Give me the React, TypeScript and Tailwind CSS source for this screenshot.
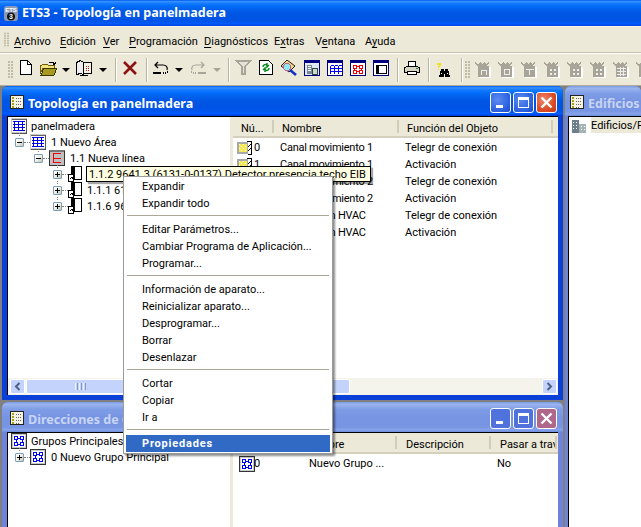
import React from "react";

const Svg = ({ w = 16, h = 16, children, className = "" }: { w?: number; h?: number; children: React.ReactNode; className?: string }) => (
  <svg width={w} height={h} viewBox={`0 0 ${w} ${h}`} shapeRendering="crispEdges" className={`shrink-0 block ${className}`}>
    {children}
  </svg>
);

const GridIcon = () => (
  <Svg>
    <rect x="0.5" y="0.5" width="15" height="15" fill="#fff" stroke="#000080" />
    <rect x="1" y="1" width="14" height="2" fill="#000080" />
    <path d="M3 5v8M7 5v8M11 5v8M3 5h3M3 8h3M3 11h3M7 5h3M7 8h3M7 11h3M11 5h3M11 8h3M11 11h3" stroke="#0000ff" fill="none" transform="translate(.5 .5)" />
  </Svg>
);
const RedGridIcon = () => (
  <Svg>
    <rect x="0.5" y="0.5" width="15" height="15" fill="#fff" stroke="#000080" />
    <rect x="1" y="1" width="14" height="2" fill="#000080" />
    <path d="M3 5h3v3h-3zM9 5h3v3h-3zM3 10h3v3h-3zM9 10h3v3h-3zM6 6h3M6 11h3M4 8v2M11 8v2" stroke="#f00000" fill="none" transform="translate(.5 .5)" />
  </Svg>
);
const FrameIcon = () => (
  <Svg>
    <rect x="0.5" y="0.5" width="15" height="15" fill="#fff" stroke="#000080" />
    <rect x="1" y="1" width="14" height="2" fill="#000080" />
    <rect x="3.5" y="5.5" width="10" height="8" fill="#fff" stroke="#000" />
    <rect x="3" y="5" width="3" height="9" fill="#000" />
  </Svg>
);
const TreeGrid = () => (
  <Svg>
    <rect x="0" y="0" width="16" height="16" fill="#c8c8c8" />
    <rect x="0.5" y="0.5" width="15" height="2" fill="#666" />
    <rect x="1" y="2" width="14" height="12" fill="#fff" />
    <path d="M2 3.500h12M2 6.500h12M2 9.500h12M2 12.500h12M3.500 3v10M7.500 3v10M11.500 3v10" stroke="#0000f0" fill="none" />
    <path d="M15.500 1v15M1 15.500h15" stroke="#555" />
  </Svg>
);
const TreeLine = () => (
  <Svg>
    <rect x="0" y="0" width="16" height="16" fill="#c0c0c0" />
    <rect x="0" y="0" width="16" height="2" fill="#777" />
    <path d="M4.500 3v10M4 3.500h8M4 8.500h8M4 12.500h8" stroke="#f00000" fill="none" />
    <path d="M15.500 1v15M0 15.500h16M0.500 1v15" stroke="#333" />
  </Svg>
);
const TreeGroup = () => (
  <Svg>
    <rect x="0" y="0" width="16" height="16" fill="#c8c8c8" />
    <rect x="2" y="2" width="12" height="12" fill="#fff" />
    <path d="M3.500 3.500h3v3h-3zM9.500 3.500h3v3h-3zM3.500 9.500h3v3h-3zM9.500 9.500h3v3h-3zM6 5.500h4M6 11.500h4M5 6v4M11 6v4" stroke="#0000f0" fill="none" />
    <path d="M15.500 1v15M0 15.500h16M0.500 0v16M0 0.500h16" stroke="#333" />
  </Svg>
);
const Device = () => (
  <Svg w={14} h={16}>
    <rect x="3.500" y="0.500" width="10" height="13" fill="#fff" stroke="#000" />
    <rect x="3" y="0" width="4" height="14" fill="#000" />
    <rect x="0" y="8" width="6" height="8" fill="#fff" />
    <rect x="0.500" y="8.500" width="5" height="7" fill="#fff" stroke="#000" />
    <path d="M2 13l2-2M3 11h1.500v1.500" stroke="#000" fill="none" />
  </Svg>
);
const ObjIcon = () => (
  <Svg w={17} h={14}>
    <rect x="0" y="1" width="11" height="12" fill="#a8a8a8" />
    <rect x="2" y="3" width="8" height="8" fill="#f6ea50" />
    <path d="M2 3h1M4 5h1M6 3h1M8 5h1M2 7h1M6 7h1M4 9h1M8 9h1" stroke="#fff" transform="translate(0 .5)" />
    <path d="M9 0h5M14 0v13M10 13h4M10 6l3-3M10 10l3-3" stroke="#000" fill="none" transform="translate(.5 .5)" />
  </Svg>
);
const ListIcon = () => (
  <Svg w={14} h={14}>
    <rect x="0.500" y="0.500" width="13" height="13" fill="#f4f2e4" stroke="#222" />
    <path d="M2 3h2M2 6h2M2 9h2M2 12h2" stroke="#a8a010" strokeWidth="2" />
    <path d="M6 3.500h6M6 6.500h6M6 9.500h6M6 12h4" stroke="#666" strokeDasharray="1 1" />
  </Svg>
);

const Expander = ({ open }: { open?: boolean }) => (
  <span className="relative w-[9px] h-[9px] shrink-0 rounded-[1px] border border-[#7b9ebd] bg-[linear-gradient(135deg,#ffffff,#f0efe5_50%,#c6c3b2)] flex items-center justify-center">
    <span className="w-[5px] h-px bg-black" />
    {!open && <span className="absolute w-px h-[5px] bg-black left-[3px] top-[1px]" />}
  </span>
);

const Dots = ({ className }: { className: string }) => (
  <span className={`absolute border-l border-dotted border-[#808080] w-px ${className}`} />
);

type RowP = { pad: string; open?: boolean; icon: React.ReactNode; text: string; leaf?: boolean; children?: React.ReactNode };
const TreeRow = ({ pad, open, icon, text, leaf, children }: RowP) => (
  <div className={`relative h-4 flex items-center ${pad}`}>
    {children}
    {!leaf && <Expander open={open} />}
    {!leaf && <span className="w-[6px] border-t border-dotted border-[#808080] shrink-0" />}
    {icon}
    <span className={`${leaf ? "ml-[4px]" : "ml-[5px]"} whitespace-nowrap`}>{text}</span>
  </div>
);

const CapButton = ({ kind, active }: { kind: "min" | "max" | "close"; active: boolean }) => {
  const bg =
    kind === "close"
      ? active
        ? "bg-[radial-gradient(circle_at_35%_35%,#f0896e,#dc4a26_60%,#c23a18)]"
        : "bg-[#b0688a]"
      : active
        ? "bg-[radial-gradient(circle_at_35%_35%,#5b8cf0,#2a5fe0_70%,#1e48c8)]"
        : "bg-[#4f72dc]";
  return (
    <span className={`relative w-[21px] h-[21px] rounded-[3px] border border-white flex items-center justify-center ${bg}`}>
      {kind === "min" && <span className="absolute left-[5px] bottom-[4px] w-[7px] h-[3px] bg-white" />}
      {kind === "max" && <span className="w-[11px] h-[11px] border border-white border-t-[3px]" />}
      {kind === "close" && (
        <svg width="13" height="13" viewBox="0 0 13 13">
          <path d="M1.500 1.500l10 10M11.500 1.500l-10 10" stroke="#fff" strokeWidth="2.400" />
        </svg>
      )}
    </span>
  );
};

const activeBar =
  "bg-[linear-gradient(180deg,#0058ee_0%,#3593ff_6%,#1a7dff_12%,#036ffc_22%,#0262ee_34%,#0057e5_48%,#0054e3_66%,#0055eb_84%,#005bff_92%,#003dd7_100%)]";
const inactiveBar =
  "bg-[linear-gradient(180deg,#7a9ae6_0%,#9ab4ee_8%,#7f9de6_24%,#7694e2_50%,#7795e2_84%,#86a3ea_92%,#6f8ddc_100%)]";

const Win = ({
  title,
  active,
  buttons,
  iconMl = "ml-[8px]",
  className,
  children,
}: {
  title: string;
  active: boolean;
  buttons?: boolean;
  iconMl?: string;
  className: string;
  children: React.ReactNode;
}) => (
  <div className={`flex flex-col min-h-0 overflow-hidden rounded-t-[6px] ${active ? "bg-[#0a3fd8]" : "bg-[#6f83d8]"} ${className}`}>
    <div className={`h-[30px] pt-[2px] shrink-0 flex items-center ${active ? activeBar : inactiveBar}`}>
      <span className={`mr-[4px] ${iconMl}`}>
        <ListIcon />
      </span>
      <span className={`pt-[4px] text-[12.500px] font-bold whitespace-nowrap font-['Noto_Sans',sans-serif] ${active ? "text-white" : "text-[#c8d4f4]"}`}>{title}</span>
      {buttons && (
        <span className="ml-auto mr-[6px] flex gap-[2px]">
          <CapButton kind="min" active={active} />
          <CapButton kind="max" active={active} />
          <CapButton kind="close" active={active} />
        </span>
      )}
    </div>
    {children}
  </div>
);

const Th = ({ w, text, cls = "pl-[8px]" }: { w: string; text: string; cls?: string }) => (
  <div className={`relative h-full pt-[4px] flex items-center whitespace-nowrap overflow-hidden shrink-0 ${w} ${cls}`}>
    {text}
    <span className="absolute right-0 top-[3px] bottom-[3px] w-[2px] bg-[#d0cdb8]" />
  </div>
);
const ListHead = ({ children }: { children: React.ReactNode }) => (
  <div className="h-[21px] shrink-0 flex bg-[#ece9d8] border-b-[2px] border-[#d4d0bd]">{children}</div>
);

const Scroll = ({ dir }: { dir: "l" | "r" }) => (
  <span className="w-[15px] h-[15px] shrink-0 rounded-[2px] border border-white bg-[#c3d3fb] flex items-center justify-center">
    <svg width="7" height="9" viewBox="0 0 7 9">
      <path d={dir === "l" ? "M5.500 1L2 4.500 5.500 8" : "M1.500 1L5 4.500 1.500 8"} fill="none" stroke="#4d6185" strokeWidth="2" />
    </svg>
  </span>
);

const ObjRow = ({ n, name, fn }: { n: string; name: string; fn: string }) => (
  <div className="h-[17px] flex items-center whitespace-nowrap">
    <span className="ml-[4px] w-[17px]">
      <ObjIcon />
    </span>
    <span className="w-[26px]">{n}</span>
    <span className="w-[125px] tracking-[-0.25px]">{name}</span>
    <span>{fn}</span>
  </div>
);

const U = ({ a, u, b, w }: { a: string; u: string; b: string; w: string }) => (
  <span className={`shrink-0 whitespace-nowrap ${w}`}>
    {a}
    <span className="underline underline-offset-2">{u}</span>
    {b}
  </span>
);

const Grip = ({ className }: { className: string }) => (
  <span className={`shrink-0 w-[5px] grid grid-cols-2 gap-[1px] ${className}`}>
    {Array.from({ length: 12 }).map((_, i) => (
      <span key={i} className="w-[2px] h-[2px] bg-[#c1bca6]" />
    ))}
  </span>
);

const Sep = ({ cls }: { cls: string }) => <span className={`shrink-0 w-[2px] h-[24px] bg-[#b8b5a2] border-r border-white ${cls}`} />;
const Caret = ({ gray, cls }: { gray?: boolean; cls: string }) => (
  <span
    className={`shrink-0 w-0 h-0 border-x-[4px] border-x-transparent border-t-[4px] ${gray ? "border-t-[#a8a498]" : "border-t-black"} ${cls}`}
  />
);

const DisabledIcon = ({ v, cls }: { v: number; cls: string }) => (
  <span className={`shrink-0 translate-y-[2px] ${cls}`}>
    <Svg>
      <rect x="4" y="5" width="12" height="11" fill="#fff" />
      <path d="M0 0l3 2 2-2 2 2 2-2 2 2 3-2v2l-3 2H3L0 2z" fill="#a8a498" />
      <rect x="3" y="4" width="11" height="11" fill="#a8a498" />
      {v === 0 && <path d="M6 13V8h5v5" fill="none" stroke="#eee" />}
      {v === 1 && <rect x="6.500" y="7.500" width="5" height="5" fill="none" stroke="#eee" />}
      {v === 2 && <path d="M5 7.500h8M8.500 7v6" fill="none" stroke="#eee" />}
      {v === 3 && <path d="M6 7h2v2H6zM10 7h2v2h-2zM6 11h2v2H6zM10 11h2v2h-2z" fill="#eee" />}
      {v === 4 && <path d="M4 6.500h9M4 9.500h9M4 12.500h9M7.500 5v9M10.500 5v9" fill="none" stroke="#eee" />}
    </Svg>
  </span>
);

const Toolbar = () => (
  <div className="h-[32px] shrink-0 flex items-center bg-[#ece9d8] border-t border-white [&_svg]:-translate-y-[2px]">
    <Grip className="ml-[8px]" />
    <span className="ml-[7px]">
      <Svg w={12} h={15}>
        <path d="M.5.500h7l4 4v10H.5z" fill="#fff" stroke="#000" />
        <path d="M7.500.5v4h4" fill="none" stroke="#000" />
      </Svg>
    </span>
    <span className="ml-[8px]">
      <Svg w={17} h={16}>
        <path d="M0 5h2l1-1h4l1 1h6v3H3l-3 6z" fill="#f4e27a" stroke="#6b5a10" strokeWidth="1" />
        <path d="M1 15l3-7h13l-3 7z" fill="#a89a20" stroke="#3a3a00" />
        <path d="M9 2.500h4l2 2M13 5l2-.5.5-2" fill="none" stroke="#000" />
      </Svg>
    </span>
    <Caret cls="ml-[5px]" />
    <span className="ml-[6px]">
      <Svg w={16} h={16}>
        <path d="M.5 2.500l4-2 3 2v12l-3-1-4 1z" fill="#eee" stroke="#000" />
        <path d="M7.500 2.500h8v11h-8z" fill="#f4f2e4" stroke="#000" />
        <path d="M10 6h1M12 6h1M10 8h1M12 8h1M10 10h1M12 10h1" stroke="#b02020" />
        <path d="M4 15.500h8" stroke="#000" />
      </Svg>
    </span>
    <Caret cls="ml-[7px]" />
    <Sep cls="ml-[8px]" />
    <span className="ml-[6px]">
      <Svg w={14} h={14}>
        <path d="M1 1l12 12M13 1L1 13" stroke="#8a1414" strokeWidth="2.600" fill="none" shapeRendering="auto" />
      </Svg>
    </span>
    <Sep cls="ml-[9px]" />
    <span className="ml-[5px]">
      <Svg w={16} h={14}>
        <path d="M5 1L2 4l3 3M2 4h8c3 0 5 2 4 5" fill="none" stroke="#000" strokeWidth="1.200" shapeRendering="auto" />
        <path d="M0 12h8M10 12h1M12 12h1M14 11h1" stroke="#000" strokeWidth="2" />
      </Svg>
    </span>
    <Caret cls="ml-[6px]" />
    <span className="ml-[7px]">
      <Svg w={16} h={14}>
        <path d="M11 1l3 3-3 3M14 4H6C3 4 1 6 2 9" fill="none" stroke="#a8a498" strokeWidth="1.200" shapeRendering="auto" />
        <path d="M8 12h8M5 12h1M3 12h1M1 11h1" stroke="#a8a498" strokeWidth="2" />
      </Svg>
    </span>
    <Caret gray cls="ml-[7px]" />
    <Sep cls="ml-[7px]" />
    <span className="ml-[5px]">
      <Svg w={17} h={15}>
        <path d="M0 0h17l-6 7v8H6V7z" fill="#a8a498" />
        <path d="M4 2h9l-4 5v6H8V7z" fill="#e4e2d4" />
      </Svg>
    </span>
    <span className="ml-[7px]">
      <Svg w={14} h={15}>
        <path d="M.5.500h9l4 4v10H.5z" fill="#fff" stroke="#000" />
        <path d="M4 7c0-2 2-3 4-2M8 3v4l2-2M10 8c0 2-2 3-4 2M6 12V8l-2 2" fill="none" stroke="#0a8a20" strokeWidth="1.500" shapeRendering="auto" />
      </Svg>
    </span>
    <span className="ml-[8px]">
      <Svg w={16} h={16}>
        <path d="M0 6l6-6 8 6-6 6z" fill="#f0d878" stroke="#222" strokeWidth="1" shapeRendering="auto" />
        <circle cx="6" cy="7" r="3.500" fill="#8fe8f0" stroke="#c060a0" />
        <path d="M9 10l6 5" stroke="#1030c8" strokeWidth="2.500" shapeRendering="auto" />
      </Svg>
    </span>
    <span className="ml-[7px]">
      <Svg>
        <rect x="0.500" y="0.500" width="15" height="15" fill="#dfe8ef" stroke="#000080" />
        <rect x="1" y="1" width="14" height="2" fill="#000080" />
        <rect x="3" y="5" width="5" height="9" fill="#789" />
        <rect x="8" y="8" width="5" height="6" fill="#cdb" stroke="#345" />
        <path d="M4 6.500h3M4 8.500h3M4 10.500h3" stroke="#fff" />
      </Svg>
    </span>
    <span className="ml-[7px]">
      <GridIcon />
    </span>
    <span className="ml-[7px]">
      <RedGridIcon />
    </span>
    <span className="ml-[7px]">
      <FrameIcon />
    </span>
    <Sep cls="ml-[8px]" />
    <span className="ml-[5px]">
      <Svg w={16} h={14}>
        <path d="M4.500.5h7v5h-7z" fill="#fff" stroke="#000" />
        <path d="M.5 7l3-2h9l3 2v4H.5z" fill="#d8d4c4" stroke="#000" />
        <path d="M3.500 10.500h9v3h-9z" fill="#fff" stroke="#000" />
        <path d="M12 7h2" stroke="#1a8a20" />
      </Svg>
    </span>
    <Sep cls="ml-[8px]" />
    <span className="ml-[5px] translate-y-[2px]">
      <Svg w={16} h={16}>
        <path d="M2 1h3l1 1v2L4 5v1H3V4l1-1H2z" fill="#f0e020" />
        <rect x="3" y="7" width="1" height="1" fill="#f0e020" />
        <path d="M6 7h3v2h1V7h3l2 8h-5v-3H9v3H4z" fill="#000" />
        <path d="M6 11h1M12 11h1" stroke="#fff" />
      </Svg>
    </span>
    <Sep cls="ml-[10px]" />
    <Grip className="ml-[2px]" />
    <DisabledIcon v={0} cls="ml-[5px]" />
    <DisabledIcon v={1} cls="ml-[7px]" />
    <DisabledIcon v={2} cls="ml-[7px]" />
    <DisabledIcon v={3} cls="ml-[7px]" />
    <DisabledIcon v={3} cls="ml-[7px]" />
    <DisabledIcon v={3} cls="ml-[7px]" />
    <DisabledIcon v={4} cls="ml-[7px]" />
    <DisabledIcon v={3} cls="ml-[7px]" />
  </div>
);

const MI = ({ t, sel }: { t: string; sel?: boolean }) => (
  <div className={`h-[17px] flex items-center pl-[16px] whitespace-nowrap ${sel ? "bg-[#316ac5] text-white font-bold tracking-[0.8px]" : ""}`}>{t}</div>
);
const MS = () => <div className="h-px bg-[#aca899] mx-[1px] mt-[3px] mb-[5px]" />;

export default function App() {
  return (
    <div className="relative w-[641px] h-[527px] overflow-hidden flex flex-col bg-[#808080] text-[11px] leading-none text-black font-['Roboto',sans-serif]">
      <div className={`h-[26px] shrink-0 flex items-center text-white text-[12.500px] font-bold font-['Noto_Sans',sans-serif] ${activeBar}`}>
        <span className="ml-[4px] mr-[4px]">
          <svg width="14" height="15" viewBox="0 0 14 15">
            <rect x="0" y="0" width="14" height="15" rx="3" fill="#8a9ab8" />
            <text x="7" y="6" textAnchor="middle" fontSize="6" fill="#fff" fontFamily="Liberation Sans">ETS</text>
            <circle cx="7" cy="10.500" r="4" fill="#111" />
            <text x="7" y="13" textAnchor="middle" fontSize="7" fill="#fff" fontFamily="Liberation Sans" fontWeight="700">3</text>
          </svg>
        </span>
        ETS3 - Topología en panelmadera
      </div>
      <div className="h-[27px] shrink-0 flex items-center bg-[#ece9d8] border-t border-[#f5f3e8] border-b border-b-[#c4c0ac]">
        <Grip className="ml-[4px] scale-y-[0.8]" />
        <span className="ml-[5px] pt-[4px] flex">
          <U a="" u="A" b="rchivo" w="w-[46px]" />
          <U a="" u="E" b="dición" w="w-[43px]" />
          <U a="" u="V" b="er" w="w-[26px]" />
          <U a="" u="P" b="rogramación" w="w-[75px]" />
          <U a="" u="D" b="iagnósticos" w="w-[70px]" />
          <U a="E" u="x" b="tras" w="w-[41px]" />
          <U a="V" u="e" b="ntana" w="w-[50px]" />
          <U a="A" u="y" b="uda" w="w-[40px]" />
        </span>
      </div>
      <Toolbar />
      <div className="flex-1 min-h-0 flex border-t border-[#b0ac98]">
        <div className="w-[563px] shrink-0 pl-[2px] flex flex-col gap-[2px] min-h-0">
          <Win title="Topología en panelmadera" active buttons className="h-[314px] shrink-0 pb-[5px]">
            <div className="flex-1 min-h-0 flex ml-[5px] mr-[5px] border-l border-t border-black bg-[#ece9d8]">
              <div className="w-[222px] shrink-0 flex flex-col bg-white">
                <div className="flex-1 pt-[1px]">
                  <TreeRow pad="pl-[3px]" leaf icon={<TreeGrid />} text="panelmadera" />
                  <TreeRow pad="pl-[7px]" open icon={<TreeGrid />} text="1 Nuevo Área">
                    <Dots className="left-[11px] -top-[1px] h-[3px]" />
                  </TreeRow>
                  <TreeRow pad="pl-[26px]" open icon={<TreeLine />} text="1.1 Nueva línea">
                    <Dots className="left-[30px] -top-[1px] h-[3px]" />
                  </TreeRow>
                  <TreeRow pad="pl-[45px]" icon={<Device />} text="1.1.2 9641.3">
                    <Dots className="left-[49px] -top-[1px] h-[3px]" />
                  </TreeRow>
                  <TreeRow pad="pl-[45px]" icon={<Device />} text="1.1.1 6131-0-0137">
                    <Dots className="left-[49px] -top-[1px] h-[3px]" />
                  </TreeRow>
                  <TreeRow pad="pl-[45px]" icon={<Device />} text="1.1.6 9641.3">
                    <Dots className="left-[49px] -top-[1px] h-[3px]" />
                  </TreeRow>
                </div>
                <div className="h-[17px] shrink-0 flex items-center pl-[2px] bg-[#f4f3ec]">
                  <Scroll dir="l" />
                  <span className="ml-[1px] w-[108px] h-[15px] rounded-[2px] border border-white bg-[#c3d3fb] flex items-center justify-center gap-[1px]">
                    <span className="w-px h-[7px] bg-[#eef2fd]" />
                    <span className="w-px h-[7px] bg-[#8098c8]" />
                    <span className="w-px h-[7px] bg-[#eef2fd]" />
                    <span className="w-px h-[7px] bg-[#8098c8]" />
                    <span className="w-px h-[7px] bg-[#eef2fd]" />
                    <span className="w-px h-[7px] bg-[#8098c8]" />
                  </span>
                </div>
              </div>
              <div className="w-[3px] shrink-0" />
              <div className="flex-1 min-w-0 flex flex-col bg-white">
                <ListHead>
                  <Th w="w-[41px]" text="Nú..." />
                  <Th w="w-[125px]" text="Nombre" />
                  <Th w="w-[154px]" text="Función del Objeto" />
                </ListHead>
                <div className="flex-1 pt-px">
                  <ObjRow n="0" name="Canal movimiento 1" fn="Telegr de conexión" />
                  <ObjRow n="1" name="Canal movimiento 1" fn="Activación" />
                  <ObjRow n="2" name="Canal movimiento 2" fn="Telegr de conexión" />
                  <ObjRow n="3" name="Canal movimiento 2" fn="Activación" />
                  <ObjRow n="4" name="Canal 1.1 m HVAC" fn="Telegr de conexión" />
                  <ObjRow n="5" name="Canal 1.1 m HVAC" fn="Activación" />
                </div>
                <div className="h-[17px] shrink-0 flex items-center pr-[1px] bg-[#f4f3ec]">
                  <span className="w-[117px] h-[15px] rounded-[2px] border border-white bg-[#c3d3fb]" />
                  <span className="ml-auto">
                    <Scroll dir="r" />
                  </span>
                </div>
              </div>
            </div>
          </Win>
          <Win title="Direcciones de Grupo en panelmadera" active={false} buttons className="flex-1">
            <div className="flex-1 min-h-0 flex ml-[5px] mr-[5px] border-l border-t border-black bg-[#ece9d8]">
              <div className="w-[222px] shrink-0 bg-white">
                <TreeRow pad="pl-[3px]" leaf icon={<TreeGroup />} text="Grupos Principales" />
                <TreeRow pad="pl-[7px]" icon={<TreeGroup />} text="0 Nuevo Grupo Principal">
                  <Dots className="left-[11px] -top-[1px] h-[3px]" />
                </TreeRow>
              </div>
              <div className="w-[3px] shrink-0" />
              <div className="flex-1 min-w-0 flex flex-col bg-white overflow-hidden">
                <ListHead>
                  <Th w="w-[164px]" text="Nombre" cls="pl-[72px]" />
                  <Th w="w-[94px]" text="Descripción" cls="pl-[9px]" />
                  <Th w="w-[66px]" text="Pasar a través" cls="pl-[9px]" />
                </ListHead>
                <div className="h-[17px] mt-px flex items-center whitespace-nowrap">
                  <span className="ml-[6px] w-[15px]">
                    <TreeGroup />
                  </span>
                  <span className="w-[55px]">0</span>
                  <span className="w-[188px]">Nuevo Grupo ...</span>
                  <span>No</span>
                </div>
              </div>
            </div>
          </Win>
        </div>
        <Win title="Edificios" active={false} iconMl="ml-[5px]" className="w-[76px] ml-[2px] shrink-0">
          <div className="flex-1 min-h-0 ml-[3px] border-l border-t border-black bg-white">
            <div className="h-4 flex items-center pl-[2px]">
              <Svg>
                <rect x="1" y="3" width="7" height="13" fill="#6d7f8a" />
                <rect x="8" y="7" width="7" height="9" fill="#a5b3b3" />
                <path d="M2 5h1M5 5h1M2 8h1M5 8h1M2 11h1M5 11h1M10 9h1M13 9h1M10 12h1M13 12h1" stroke="#fff" />
              </Svg>
              <span className="ml-[4px] bg-[#ece9d8] h-4 flex items-center pr-[1px] whitespace-nowrap">Edificios/F</span>
            </div>
          </div>
        </Win>
      </div>

      <div className="absolute left-[86px] top-[166px] w-[285px] h-[16px] bg-[#ffffe1] border border-black shadow-[2px_2px_1px_rgba(0,0,0,0.35)] flex items-center pl-[2px] whitespace-nowrap overflow-hidden">
        1.1.2 9641.3 (6131-0-0137) Detector presencia techo EIB
      </div>

      <div className="absolute left-[123px] top-[176px] w-[210px] h-[278px] bg-white border border-[#9a9a9a] shadow-[2px_2px_2px_rgba(0,0,0,0.45)] px-[2px] pt-[1px]">
        <MI t="Expandir" />
        <MI t="Expandir todo" />
        <MS />
        <MI t="Editar Parámetros..." />
        <MI t="Cambiar Programa de Aplicación..." />
        <MI t="Programar..." />
        <MS />
        <MI t="Información de aparato..." />
        <MI t="Reinicializar aparato..." />
        <MI t="Desprogramar..." />
        <MI t="Borrar" />
        <MI t="Desenlazar" />
        <MS />
        <MI t="Cortar" />
        <MI t="Copiar" />
        <MI t="Ir a" />
        <MS />
        <MI t="Propiedades" sel />
      </div>
    </div>
  );
}
